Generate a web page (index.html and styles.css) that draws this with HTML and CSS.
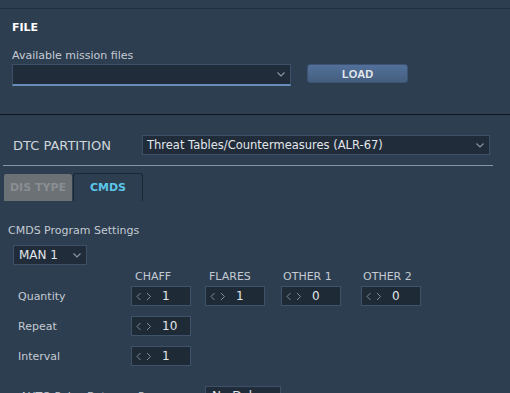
FILE: index.html
```html
<!DOCTYPE html>
<html lang="en">
<head>
  <meta charset="UTF-8" />
  <meta name="viewport" content="width=device-width, initial-scale=1.0"/>
  <title>DTC Editor</title>
  <link rel="stylesheet" href="styles.css">
</head>
<body>

  <div class="topbar"></div>

  <div class="file-panel">
    <div class="panel-title">FILE</div>
    <div class="field-label">Available mission files</div>
    <div class="file-row">
      <div class="select select-file">
        <span></span>
        <svg class="chev" width="8" height="5" viewBox="0 0 8 5"><path d="M0.5 0.5 L4 4 L7.5 0.5" /></svg>
      </div>
      <button class="btn-load">LOAD</button>
    </div>
  </div>

  <div class="dtc">
    <div class="dtc-row">
      <span class="dtc-label">DTC PARTITION</span>
      <div class="select select-dtc">
        <span>Threat Tables/Countermeasures (ALR-67)</span>
        <svg class="chev" width="8" height="5" viewBox="0 0 8 5"><path d="M0.5 0.5 L4 4 L7.5 0.5" /></svg>
      </div>
    </div>
    <div class="dtc-rule"></div>

    <div class="tabs">
      <div class="tab tab-off">DIS TYPE</div>
      <div class="tab tab-on">CMDS</div>
    </div>

    <div class="cmds">
      <div class="cmds-title">CMDS Program Settings</div>
      <div class="select select-prog">
        <span>MAN 1</span>
        <svg class="chev" width="8" height="5" viewBox="0 0 8 5"><path d="M0.5 0.5 L4 4 L7.5 0.5" /></svg>
      </div>

      <div class="prog-head">
        <span></span>
        <span class="hdr">CHAFF</span>
        <span class="hdr">FLARES</span>
        <span class="hdr hdr-tight">OTHER 1</span>
        <span class="hdr hdr-tight">OTHER 2</span>
      </div>

      <div class="prog-rows">
        <span class="row-label">Quantity</span>
        <div class="spin"><svg class="arrows" width="16" height="9" viewBox="0 0 16 9"><path d="M4.5 1 L1 4.5 L4.5 8 M11 1 L14.5 4.5 L11 8" /></svg><span>1</span></div>
        <div class="spin"><svg class="arrows" width="16" height="9" viewBox="0 0 16 9"><path d="M4.5 1 L1 4.5 L4.5 8 M11 1 L14.5 4.5 L11 8" /></svg><span>1</span></div>
        <div class="spin"><svg class="arrows" width="16" height="9" viewBox="0 0 16 9"><path d="M4.5 1 L1 4.5 L4.5 8 M11 1 L14.5 4.5 L11 8" /></svg><span>0</span></div>
        <div class="spin"><svg class="arrows" width="16" height="9" viewBox="0 0 16 9"><path d="M4.5 1 L1 4.5 L4.5 8 M11 1 L14.5 4.5 L11 8" /></svg><span>0</span></div>

        <span class="row-label">Repeat</span>
        <div class="spin"><svg class="arrows" width="16" height="9" viewBox="0 0 16 9"><path d="M4.5 1 L1 4.5 L4.5 8 M11 1 L14.5 4.5 L11 8" /></svg><span>10</span></div>
        <span></span><span></span><span></span>

        <span class="row-label">Interval</span>
        <div class="spin"><svg class="arrows" width="16" height="9" viewBox="0 0 16 9"><path d="M4.5 1 L1 4.5 L4.5 8 M11 1 L14.5 4.5 L11 8" /></svg><span>1</span></div>
        <span></span><span></span><span></span>
      </div>

      <div class="prog-auto">
        <span class="row-label auto-label">AUTO Pulse Between</span>
        <span class="row-label auto-sub">Programs</span>
        <div class="select select-delay"><span>No Delay</span></div>
      </div>
    </div>
  </div>

</body>
</html>
```

FILE: styles.css
```css
body {
  font-family: "DejaVu Sans", sans-serif;
  background: #2d3e50;
  color: #c4cbd3;
  margin: 0;
  height: 393px;
  overflow: hidden;
}
.topbar {
  height: 8px;
  border-bottom: 1px solid #223040;
}
.file-panel {
  padding: 12px 12px 28px;
  border-bottom: 1px solid #0f151c;
}
.panel-title {
  font-size: 11px;
  line-height: 13px;
  font-weight: bold;
  color: #ffffff;
}
.field-label {
  font-size: 11px;
  line-height: 13px;
  margin-top: 15px;
}
.file-row {
  display: flex;
  align-items: flex-start;
  margin-top: 2px;
}
.select {
  display: flex;
  align-items: center;
  justify-content: space-between;
  box-sizing: border-box;
  background: #212c3a;
  border: 1px solid #3e5068;
  color: #e2e6ea;
  white-space: nowrap;
}
.chev {
  flex: none;
}
.chev path {
  fill: none;
  stroke: #8d98a4;
  stroke-width: 1.1;
}
.select-file {
  width: 279px;
  height: 22px;
  border-bottom: 2px solid #6a8cb9;
  padding: 0 5px 0 6px;
}
.btn-load {
  width: 101px;
  height: 19px;
  margin-left: 16px;
  padding: 0;
  border: 1px solid #3c5472;
  border-radius: 3px;
  background: linear-gradient(#52709a, #445e7e);
  color: #e4e8ec;
  font-family: "Liberation Sans", sans-serif;
  font-size: 11px;
  font-weight: bold;
}
.dtc {
  padding-top: 20px;
}
.dtc-row {
  display: flex;
  align-items: center;
}
.dtc-label {
  width: 129px;
  padding-left: 13px;
  font-size: 13px;
  color: #d0d6dc;
}
.select-dtc {
  width: 348px;
  height: 20px;
  padding: 0 5px 0 4px;
  font-size: 11.5px;
}
.dtc-rule {
  width: 490px;
  height: 1px;
  margin: 10px 0 0 3px;
  background: #8894a1;
}
.tabs {
  display: flex;
  align-items: flex-end;
  margin: 7px 0 0 4px;
}
.tab {
  box-sizing: border-box;
  display: flex;
  align-items: center;
  justify-content: center;
  font-size: 11px;
  font-weight: bold;
}
.tab-off {
  width: 68px;
  height: 27px;
  background: #6c7176;
  color: #8a8e93;
  border-radius: 2px 2px 0 0;
}
.tab-on {
  width: 70px;
  height: 28px;
  margin-left: 1px;
  border: 1px solid #1c2734;
  border-bottom: none;
  border-radius: 3px 3px 0 0;
  color: #5cc6ea;
}
.cmds {
  padding-left: 8px;
}
.cmds-title {
  font-size: 11px;
  line-height: 13px;
  margin-top: 23px;
}
.select-prog {
  width: 74px;
  height: 20px;
  margin: 8px 0 0 5px;
  padding: 0 5px 0 5px;
  font-size: 12px;
}
.prog-head,
.prog-rows,
.prog-auto {
  display: grid;
  grid-template-columns: 113px 74px 76px 80px 60px;
  margin-left: 10px;
}
.prog-head {
  margin-top: 5px;
  font-size: 11px;
  line-height: 13px;
}
.hdr {
  padding-left: 4px;
}
.hdr-tight {
  padding-left: 2px;
}
.prog-rows {
  margin-top: 3px;
  row-gap: 10px;
  align-items: center;
}
.row-label {
  font-size: 11px;
  white-space: nowrap;
}
.spin {
  box-sizing: border-box;
  width: 60px;
  height: 20px;
  display: flex;
  align-items: center;
  padding-left: 4px;
  background: #1f2a37;
  border: 1px solid #3e526a;
  color: #e2e6ea;
  font-size: 12px;
}
.arrows {
  margin-right: 10px;
}
.arrows path {
  fill: none;
  stroke: #7f8b98;
  stroke-width: 1;
}
.prog-auto {
  margin-top: 20px;
  align-items: center;
}
.auto-label {
  padding-left: 2px;
}
.auto-sub {
  padding-left: 7px;
}
.select-delay {
  width: 76px;
  height: 20px;
  padding-left: 6px;
  font-size: 12px;
}
```
